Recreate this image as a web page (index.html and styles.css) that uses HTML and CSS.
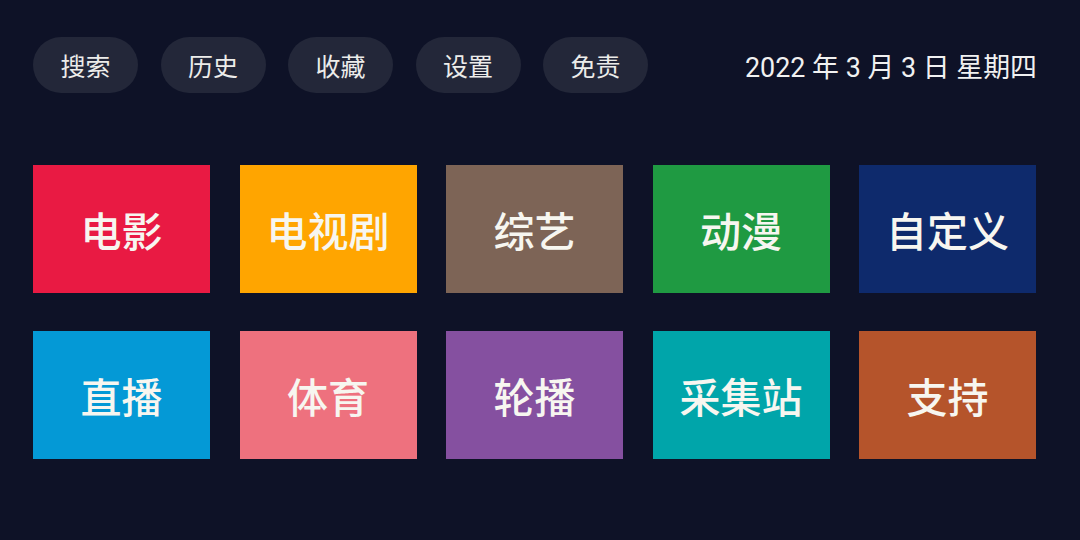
FILE: index.html
```html
<!DOCTYPE html>
<html lang="zh-CN">
<head>
<meta charset="utf-8">
<title>首页</title>
<link rel="stylesheet" href="styles.css">
</head>
<body>
<div class="page">
  <header class="topbar">
    <nav class="menu">
      <span class="pill">搜索</span>
      <span class="pill">历史</span>
      <span class="pill">收藏</span>
      <span class="pill">设置</span>
      <span class="pill">免责</span>
    </nav>
    <div class="date">2022 年 3 月 3 日 星期四</div>
  </header>
  <main class="grid">
    <div class="tile t-movie">电影</div>
    <div class="tile t-tv">电视剧</div>
    <div class="tile t-variety">综艺</div>
    <div class="tile t-anime">动漫</div>
    <div class="tile t-custom">自定义</div>
    <div class="tile t-live">直播</div>
    <div class="tile t-sport">体育</div>
    <div class="tile t-carousel">轮播</div>
    <div class="tile t-collect">采集站</div>
    <div class="tile t-support">支持</div>
  </main>
</div>
</body>
</html>
```
FILE: styles.css
```css
html, body {
  margin: 0;
  padding: 0;
  background: #0e1227;
}
body {
  width: 1080px;
  height: 540px;
  overflow: hidden;
  font-family: "Noto Sans CJK SC", "Noto Sans", sans-serif;
  color: #f3f3ef;
}
.page {
  padding: 37px 44px 0 33px;
}
.topbar {
  display: flex;
  align-items: center;
  justify-content: space-between;
  height: 56px;
}
.menu {
  display: flex;
  gap: 22.5px;
}
.pill {
  width: 105px;
  height: 56px;
  border-radius: 28px;
  background: #232739;
  display: flex;
  align-items: center;
  justify-content: center;
  font-size: 25px;
  color: #ececea;
}
.date {
  font-family: Roboto, "Noto Sans CJK SC", sans-serif;
  font-size: 26.9px;
  color: #f1f1f1;
  margin-right: -1px;
}
.grid {
  margin-top: 72px;
  display: grid;
  grid-template-columns: repeat(5, 177px);
  column-gap: 29.5px;
  row-gap: 38px;
}
.tile {
  height: 128px;
  display: flex;
  align-items: center;
  justify-content: center;
  font-size: 41px;
  font-weight: 500;
  color: #f7f6f0;
}
.t-movie { background: #e91a43; }
.t-tv { background: #ffa500; }
.t-variety { background: #7d6456; }
.t-anime { background: #1f9a42; }
.t-custom { background: #0e2a6c; }
.t-live { background: #0499d6; }
.t-sport { background: #ee717e; }
.t-carousel { background: #8550a0; }
.t-collect { background: #00a5aa; }
.t-support { background: #b5542b; }
```
